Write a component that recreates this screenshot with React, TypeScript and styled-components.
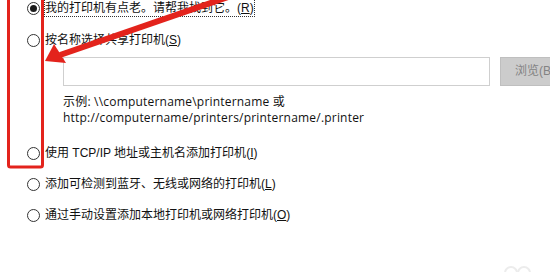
import styled, { createGlobalStyle } from "styled-components";

const GlobalStyle = createGlobalStyle`
  html, body {
    margin: 0;
    padding: 0;
    background: #ffffff;
  }
  body {
    width: 550px;
    height: 272px;
    overflow: hidden;
    font-family: "Liberation Sans", "Noto Sans CJK SC", sans-serif;
  }
`;

const options = [
  { label: "我的打印机有点老。请帮我找到它。", key: "R", checked: true, focus: true },
  { label: "按名称选择共享打印机", key: "S" },
];

const lower = [
  { label: "使用 TCP/IP 地址或主机名添加打印机", key: "I" },
  { label: "添加可检测到蓝牙、无线或网络的打印机", key: "L" },
  { label: "通过手动设置添加本地打印机或网络打印机", key: "O" },
];

type Opt = { label: string; key: string; checked?: boolean; focus?: boolean };

const Option = ({ opt, spaced }: { opt: Opt; spaced: boolean }) => (
  <Row $spaced={spaced}>
    <Radio $checked={!!opt.checked} />
    <Label $focus={!!opt.focus}>
      {opt.label}(<Key>{opt.key}</Key>)
    </Label>
  </Row>
);

const App = () => {
  return (
    <Page>
      <GlobalStyle />
      <Panel>
        {options.map((o, i) => (
          <Option key={o.key} opt={o} spaced={i > 0} />
        ))}
        <Indent>
          <InputRow>
            <TextBox />
            <BrowseButton>浏览(B)...</BrowseButton>
          </InputRow>
          <Example>
            示例: \\computername\printername 或
            <br />
            http://computername/printers/printername/.printer
          </Example>
        </Indent>
        <Lower>
          {lower.map((o, i) => (
            <Option key={o.key} opt={o} spaced={i > 0} />
          ))}
        </Lower>
      </Panel>

      <Annotation viewBox="0 0 550 272" width="550" height="272">
        <rect x="8.5" y="-6" width="34" height="173" rx="2" fill="none" stroke="#e3231c" strokeWidth="3" />
        <line x1="228" y1="-3" x2="60" y2="55" stroke="#e3231c" strokeWidth="6" />
        <polygon points="45,61 54,44 66,63" fill="#e3231c" />
      </Annotation>

      <Watermark viewBox="0 0 30 12" width="30" height="12">
        <path d="M2 12 A6 6 0 0 1 14 12" fill="none" stroke="#ececec" strokeWidth="2" />
        <path d="M15 12 A6 6 0 0 1 27 12" fill="none" stroke="#ececec" strokeWidth="2" />
      </Watermark>
    </Page>
  );
};

const Page = styled.div`
  position: relative;
  width: 550px;
  height: 272px;
  overflow: hidden;
  background: #ffffff;
  color: #111111;
  font-size: 12px;
`;

const Panel = styled.div`
  display: flex;
  flex-direction: column;
  padding-left: 27px;
`;

const Row = styled.div<{ $spaced: boolean }>`
  display: flex;
  align-items: center;
  gap: 5px;
  height: 16px;
  margin-top: ${(p) => (p.$spaced ? "16px" : "0")};
  white-space: nowrap;
`;

const Radio = styled.span<{ $checked: boolean }>`
  position: relative;
  flex: none;
  width: 11px;
  height: 11px;
  border: 1px solid #333333;
  border-radius: 50%;
  background: #ffffff;
  &::after {
    content: "";
    display: ${(p) => (p.$checked ? "block" : "none")};
    position: absolute;
    left: 2px;
    top: 2px;
    width: 7px;
    height: 7px;
    border-radius: 50%;
    background: #1c1c1c;
  }
`;

const Label = styled.span<{ $focus: boolean }>`
  line-height: 16px;
  outline: ${(p) => (p.$focus ? "1px dotted #333" : "none")};
  outline-offset: 0;
`;

const Key = styled.span`
  text-decoration: underline;
`;

const Indent = styled.div`
  margin-left: 36px;
  margin-top: 9px;
`;

const InputRow = styled.div`
  display: flex;
  gap: 10px;
  width: 600px;
`;

const TextBox = styled.div`
  width: 425px;
  height: 27px;
  border: 1px solid #cfcfcf;
  background: #ffffff;
`;

const BrowseButton = styled.div`
  width: 73px;
  height: 27px;
  border: 1px solid #bfbfbf;
  background: #cccccc;
  color: #838383;
  font-size: 12px;
  line-height: 27px;
  padding-left: 14px;
  white-space: nowrap;
`;

const Example = styled.div`
  margin-top: 8px;
  line-height: 16px;
  white-space: nowrap;
  letter-spacing: 0.2px;
  font-family: "Open Sans", "Noto Sans CJK SC", sans-serif;
`;

const Lower = styled.div`
  display: flex;
  flex-direction: column;
  margin-top: 19px;
  & > div + div {
    margin-top: 15px;
  }
`;

const Annotation = styled.svg`
  position: absolute;
  left: 0;
  top: 0;
  pointer-events: none;
`;

const Watermark = styled.svg`
  position: absolute;
  left: 503px;
  top: 261px;
`;

export default App;
